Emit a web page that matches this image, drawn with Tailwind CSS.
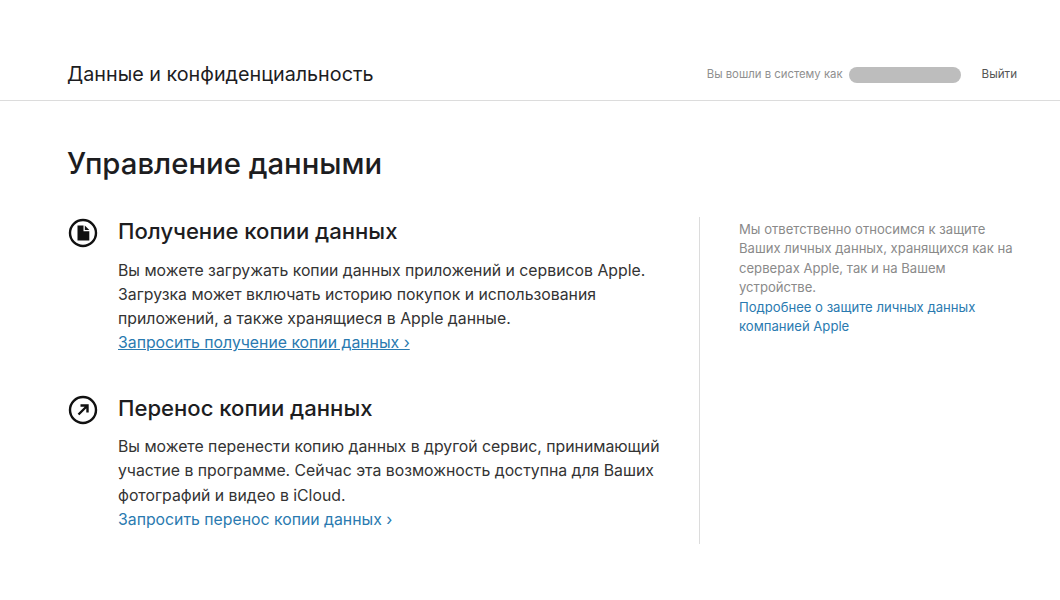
<!DOCTYPE html>
<html lang="ru">
<head>
    <meta charset="UTF-8">
    <title>Данные и конфиденциальность</title>
    <script src="https://cdn.jsdelivr.net/npm/@tailwindcss/browser@4"></script>
</head>
<body class="bg-white font-['Inter','Liberation_Sans',sans-serif] h-[600px] overflow-hidden">

    <!-- Header -->
    <header class="h-[101px] border-b border-[#dcdcdc] pl-[67px] pr-[43px] pt-[61px] flex justify-between">
        <h1 class="text-[19.75px] leading-[26px] text-[#1d1d1f]">Данные и конфиденциальность</h1>
        <div class="flex items-center h-[27px] text-[11.35px] text-[#8f8f8f]">
            <span>Вы вошли в систему как</span>
            <span class="w-[112px] h-[16px] rounded-full bg-[#bdbdbd] ml-[6px]"></span>
            <a class="ml-[21px] text-[11.6px] text-[#555]">Выйти</a>
        </div>
    </header>

    <main class="pl-[67px] pt-[45px]">
        <h2 class="text-[29.3px] leading-[36px] font-medium text-[#1d1d1f]">Управление данными</h2>

        <div class="flex mt-[35px]">
            <div class="w-[632px] space-y-[39px]">
                <!-- Copy -->
                <section class="flex">
                    <svg class="w-[30px] h-[30px] mt-[1px] ml-[1px] shrink-0" viewBox="0 0 30 30">
                        <circle cx="15" cy="15" r="13" fill="none" stroke="#111" stroke-width="2.4"/>
                        <path d="M9.5 7.5h6v5.8h5.8v9.2H9.5z" fill="#111"/>
                        <path d="M16.8 7.5l4.5 4.5h-4.5z" fill="#111"/>
                    </svg>
                    <div class="ml-[20px]">
                        <h3 class="text-[22.1px] leading-[28px] font-[450] text-[#1d1d1f]">Получение копии данных</h3>
                        <p class="mt-[14px] text-[15.8px] leading-[24px] text-[#333]">Вы можете загружать копии данных приложений и сервисов Apple.<br>Загрузка может включать историю покупок и использования<br>приложений, а также хранящиеся в Apple данные.<br><a class="text-[#2a7ab0] underline">Запросить получение копии данных ›</a></p>
                    </div>
                </section>
                <!-- Transfer -->
                <section class="flex">
                    <svg class="w-[30px] h-[30px] mt-[1px] ml-[1px] shrink-0" viewBox="0 0 30 30">
                        <circle cx="15" cy="15" r="13" fill="none" stroke="#111" stroke-width="2.4"/>
                        <path d="M10.5 19.5L19 11M12.5 10.5h7v7" fill="none" stroke="#111" stroke-width="2.4"/>
                    </svg>
                    <div class="ml-[20px]">
                        <h3 class="text-[22.1px] leading-[28px] font-[450] text-[#1d1d1f]">Перенос копии данных</h3>
                        <p class="mt-[13px] text-[15.8px] leading-[24.3px] text-[#333]">Вы можете перенести копию данных в другой сервис, принимающий<br>участие в программе. Сейчас эта возможность доступна для Ваших<br>фотографий и видео в iCloud.<br><a class="text-[#2a7ab0]">Запросить перенос копии данных ›</a></p>
                    </div>
                </section>
            </div>

            <!-- Sidebar -->
            <aside class="border-l border-[#dcdcdc] h-[327px] pl-[39px] w-[320px] text-[13.1px] leading-[19.4px] text-[#8a8a8a]">
                <p class="pt-[3px]">Мы ответственно относимся к защите<br>Ваших личных данных, хранящихся как на<br>серверах Apple, так и на Вашем<br>устройстве.<br><a class="text-[#2a7ab0]">Подробнее о защите личных данных<br>компанией Apple</a></p>
            </aside>
        </div>
    </main>
</body>
</html>
